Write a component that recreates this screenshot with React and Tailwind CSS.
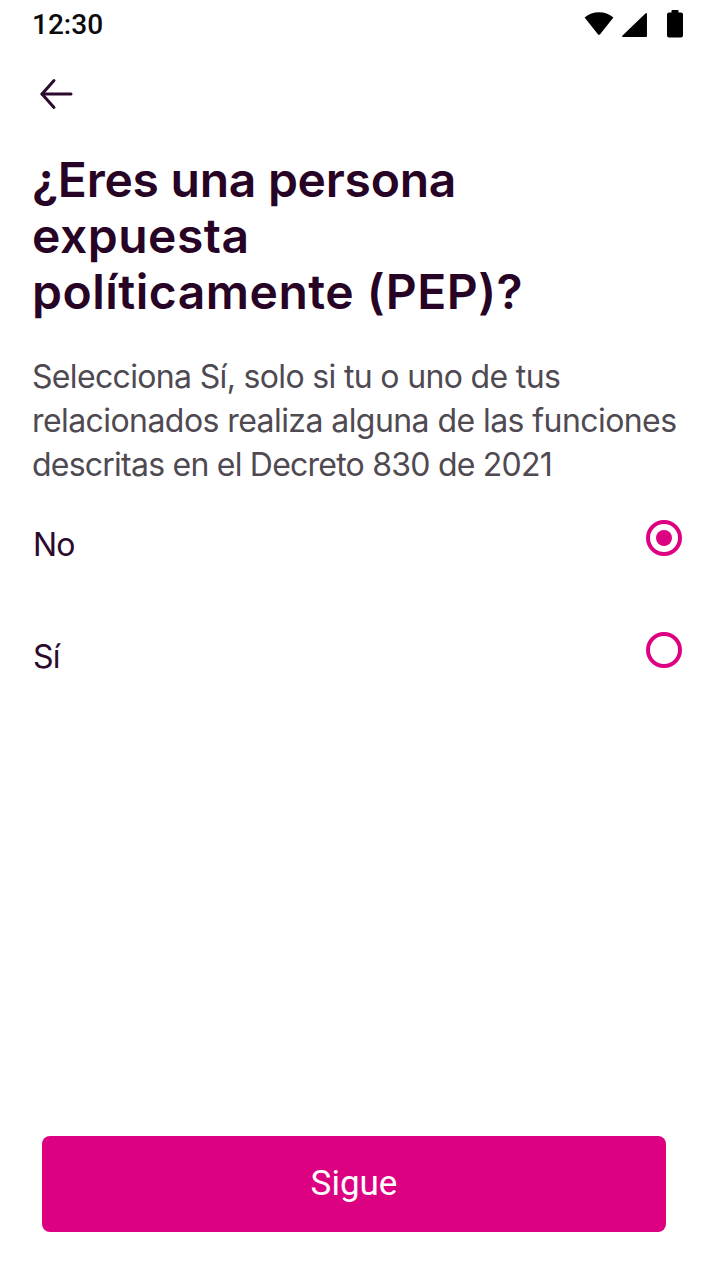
function Radio({ checked }) {
  return (
    <div className="w-9 h-9 mt-[3px] rounded-full border-4 border-[#dc0181] flex items-center justify-center">
      {checked && <div className="w-4 h-4 rounded-full bg-[#dc0181]"></div>}
    </div>
  );
}

function Option({ label, checked }) {
  return (
    <div className="h-[112px] flex justify-between pl-[33px] pr-[38px]">
      <span className="text-[32px] leading-[44px] mt-[6px] text-[#2b0a2e] font-['Inter',sans-serif] tracking-[-0.8px]">{label}</span>
      <Radio checked={checked} />
    </div>
  );
}

export default function App() {
  return (
    <div className="w-[720px] h-[1280px] bg-white flex flex-col font-['Inter',sans-serif]">
      {/* status bar */}
      <div className="h-[48px] flex items-center justify-between pl-[32px] pr-[36px]">
        <span className="pt-[2px] text-[28px] font-medium text-[#0b0b0f] font-['Roboto',sans-serif]">12:30</span>
        <svg width="100" height="28" viewBox="0 0 100 28" fill="#000">
          <path d="M0.6 7.4 C8.5 0.4 21.5 0.4 29.4 7.4 L16.1 24.2 C15.5 25 14.5 25 13.9 24.2 Z" />
          <path d="M62.2 3.8 V26.2 H38.8 Z" stroke="#000" strokeWidth="1.5" strokeLinejoin="round" />
          <path d="M87.5 1 C87.5 0.4 87.9 0 88.5 0 H93.5 C94.1 0 94.5 0.4 94.5 1 V2.5 H97 C98.1 2.5 99 3.4 99 4.5 V25.5 C99 26.6 98.1 27.5 97 27.5 H85 C83.9 27.5 83 26.6 83 25.5 V4.5 C83 3.4 83.9 2.5 85 2.5 H87.5 Z" />
        </svg>
      </div>

      {/* back arrow */}
      <div className="pl-[38px] pt-[30px] h-[104px]">
        <svg width="36" height="32" viewBox="0 0 36 32" fill="none" stroke="#2b0a2e" strokeWidth="3" strokeLinecap="round" strokeLinejoin="round">
          <path d="M33 16 H4" />
          <path d="M16 2.5 L4 16 L16 29.5" />
        </svg>
      </div>

      <h1 className="pl-[32px] text-[48px] leading-[56px] font-semibold text-[#270425]">
        <span className="block tracking-[-0.25px]">¿Eres una persona</span>
        <span className="block tracking-[0.5px]">expuesta</span>
        <span className="block tracking-[0.5px]">políticamente (PEP)?</span>
      </h1>

      <p className="mt-[35px] pl-[32px] text-[32px] leading-[44px] text-[#4f4a52]">
        <span className="block tracking-[-0.66px]">Selecciona Sí, solo si tu o uno de tus</span>
        <span className="block tracking-[-0.57px]">relacionados realiza alguna de las funciones</span>
        <span className="block tracking-[-0.77px]">descritas en el Decreto 830 de 2021</span>
      </p>

      <div className="mt-[30px]">
        <Option label="No" checked />
        <Option label="Sí" />
      </div>

      <div className="mt-auto mb-[48px] pl-[42px] pr-[54px]">
        <button className="w-full h-[96px] pt-[1px] rounded-lg bg-[#dc0181] text-white text-[35px] font-['Roboto',sans-serif]">
          Sigue
        </button>
      </div>
    </div>
  );
}
